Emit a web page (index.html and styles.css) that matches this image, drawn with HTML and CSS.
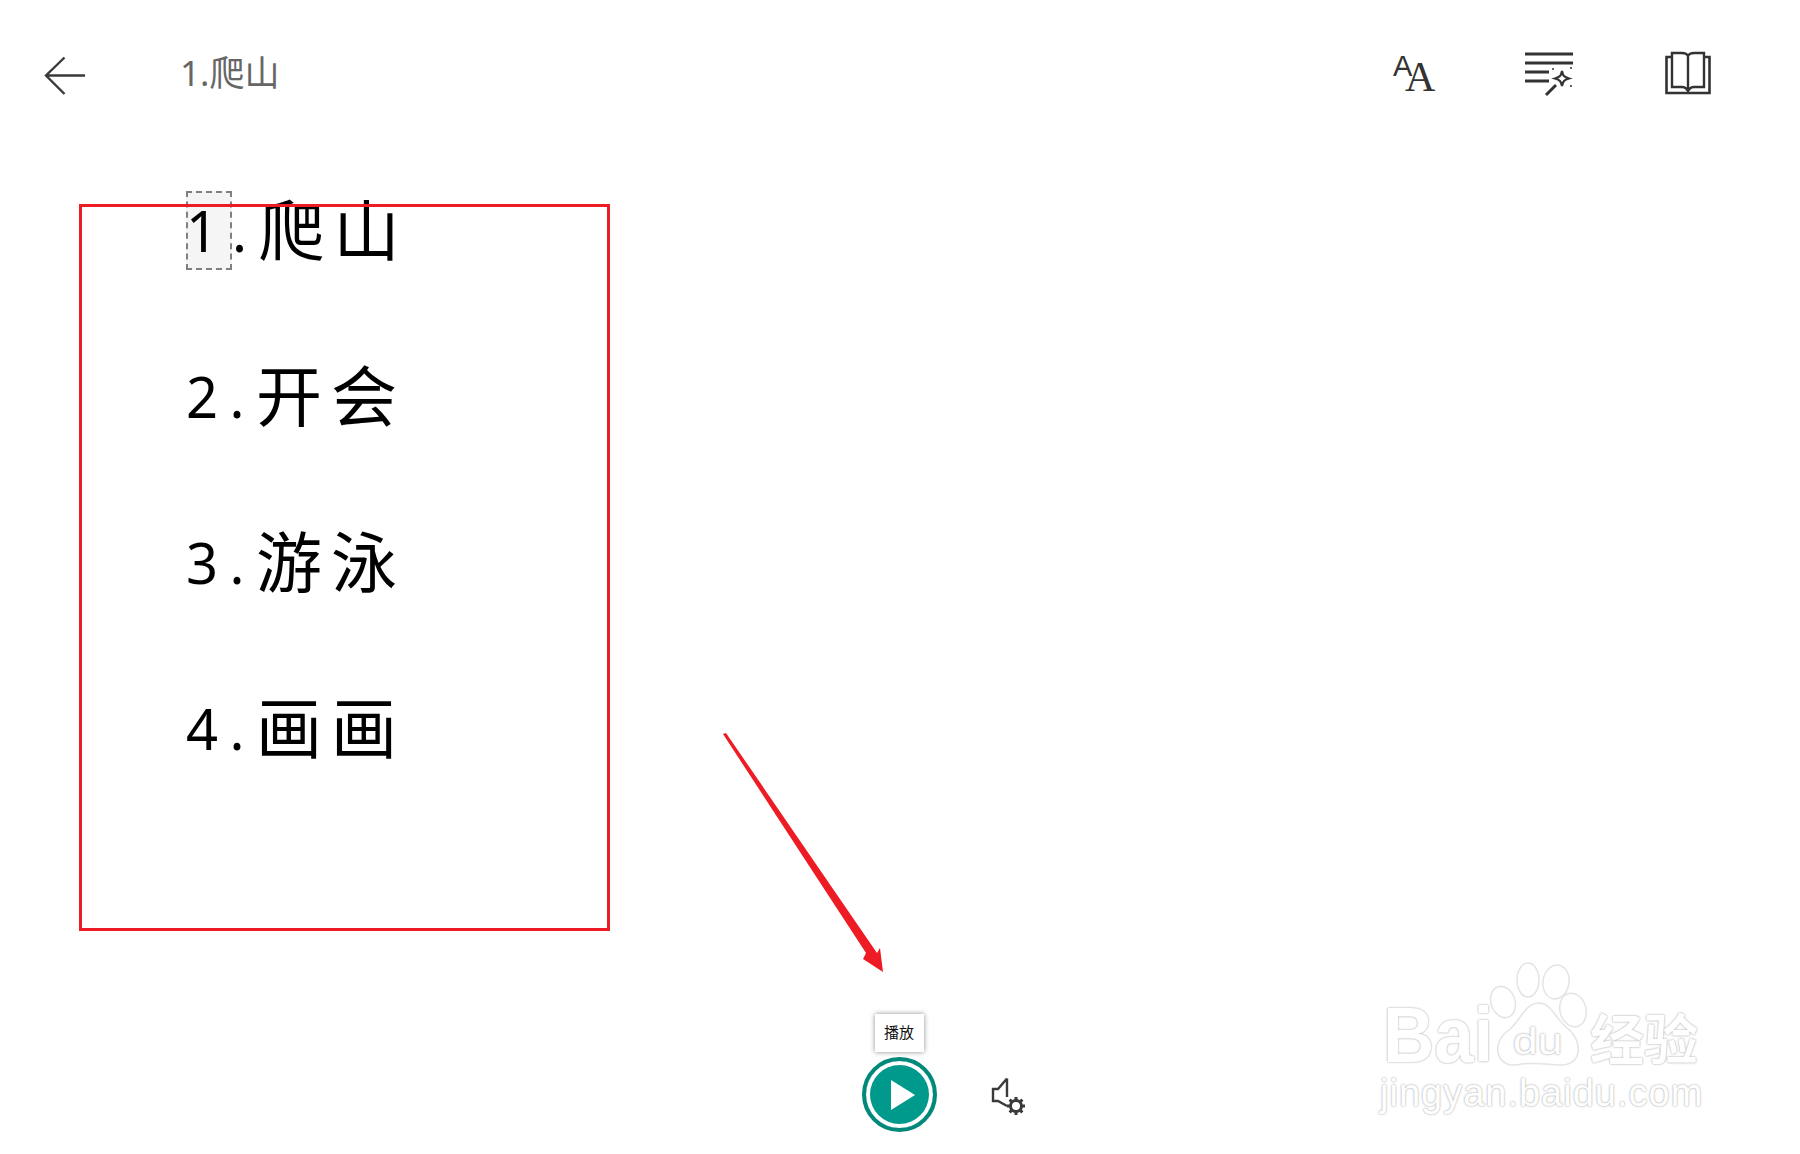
FILE: index.html
```html
<!DOCTYPE html>
<html lang="zh-CN">
  <head>
    <meta charset="UTF-8" />
    <title>1.爬山</title>
    <link rel="stylesheet" href="styles.css">
  </head>

  <body>
    <div class="page">
      <header class="topbar">
        <button class="icon-btn back-btn" aria-label="返回">
          <svg width="44" height="40" viewBox="0 0 44 40">
            <path d="M22.5 1.5 L4 19.5 L22.5 38 M4 19.5 H43" fill="none" stroke="#3a3a3a" stroke-width="2.4" />
          </svg>
        </button>
        <div class="doc-title">1.爬山</div>
        <div class="tools">
          <button class="icon-btn tool-text" aria-label="文字选项">
            <svg width="46" height="52" viewBox="0 0 46 52">
              <text x="1" y="29" class="aa-small">A</text>
              <text x="13" y="44" class="aa-big">A</text>
            </svg>
          </button>
          <button class="icon-btn tool-grammar" aria-label="语法工具">
            <svg width="50" height="46" viewBox="0 0 50 46">
              <path d="M1 3 H49 M1 12 H49 M1 21 H25 M1 30 H25" fill="none" stroke="#333" stroke-width="3" />
              <path d="M38 20 C39 25 40 26 45 27.500 C40 29 39 30 38 35 C37 30 36 29 31 27.500 C36 26 37 25 38 20 Z" fill="none" stroke="#333" stroke-width="2.200" />
              <path d="M32 34 L22 44" fill="none" stroke="#333" stroke-width="3" />
              <path d="M28 18 h2 M29 17 v2 M46 17 h2 M47 16 v2 M46 35 h2 M47 34 v2" stroke="#333" stroke-width="1" />
            </svg>
          </button>
          <button class="icon-btn tool-book" aria-label="阅读首选项">
            <svg width="46" height="44" viewBox="0 0 46 44">
              <path d="M7 2 V36 H17 C20 36 22 38 23 40 C24 38 26 36 29 36 H39 V2 H29 C26 2 24 3 23 5 C22 3 20 2 17 2 Z M23 5 V40" fill="none" stroke="#333" stroke-width="2.400" />
              <path d="M7 6 H1.500 V42 H44.500 V6 H39" fill="none" stroke="#333" stroke-width="2.600" />
            </svg>
          </button>
        </div>
      </header>

      <main class="reader">
        <p class="line"><span class="num"><span class="word-focus">1</span>.</span>爬山</p>
        <p class="line"><span class="num">2.</span>开会</p>
        <p class="line"><span class="num">3.</span>游泳</p>
        <p class="line"><span class="num">4.</span>画画</p>
      </main>

      <footer class="player">
        <div class="play-wrap">
          <div class="tooltip">播放</div>
          <button class="play-btn" aria-label="播放">
            <svg width="24" height="30" viewBox="0 0 24 30"><path d="M0 0 L24 15 L0 30 Z" fill="#fff" /></svg>
          </button>
        </div>
        <button class="icon-btn voice-btn" aria-label="语音设置">
          <svg width="36" height="38" viewBox="0 0 36 38">
            <path d="M16 1.500 L7 12 H2 V24 H7 L16 29 M16 1.500 V20" fill="none" stroke="#3a3a3a" stroke-width="2.400" />
            <circle cx="25" cy="29" r="5.500" fill="none" stroke="#3a3a3a" stroke-width="3" />
            <path d="M25 20 V23 M25 35 V38 M16 29 H19 M31 29 H34 M18.600 22.600 L20.800 24.800 M29.200 33.200 L31.400 35.400 M18.600 35.400 L20.800 33.200 M29.200 24.800 L31.400 22.600" stroke="#3a3a3a" stroke-width="3" />
          </svg>
        </button>
      </footer>

      <!-- annotations drawn over the screenshot -->
      <div class="red-box"></div>
      <svg class="red-arrow" width="170" height="250" viewBox="0 0 170 250">
        <path d="M0 2 L3 1 L154 221 L157 216 L160 240 L140 227 L143 221 Z" fill="#ed1c24" />
      </svg>

      <div class="watermark">
        <svg class="paw" width="110" height="110" viewBox="0 0 110 110">
          <ellipse cx="18" cy="42" rx="12" ry="16" transform="rotate(-20 18 42)" />
          <ellipse cx="43" cy="20" rx="11" ry="17" />
          <ellipse cx="71" cy="22" rx="13" ry="17" transform="rotate(10 71 22)" />
          <ellipse cx="88" cy="50" rx="13" ry="17" transform="rotate(-15 88 50)" />
          <path d="M54 43 C66 43 70 58 82 68 C98 80 98 105 76 105 C64 105 46 101 32 105 C10 107 6 82 24 70 C36 60 40 43 54 43 Z" />
        </svg>
        <div class="wm-logo">
          <span class="wm-bai">Bai</span><span class="wm-du">du</span><span class="wm-cn">经验</span>
        </div>
        <div class="wm-url">jingyan.baidu.com</div>
      </div>
    </div>
  </body>
</html>
```

FILE: styles.css
```css
:root {
  --ink: #000;
  --muted: #666;
  --teal: #009a8c;
  --red: #ed1c24;
}

* {
  margin: 0;
  padding: 0;
  box-sizing: border-box;
}

body {
  background: #fff;
  font-family: "Noto Sans", "Noto Sans CJK SC", sans-serif;
  overflow: hidden;
}

.page {
  position: relative;
  width: 1800px;
  height: 1154px;
  display: flex;
  flex-direction: column;
}

.icon-btn {
  background: none;
  border: none;
  display: flex;
  align-items: center;
  justify-content: center;
}

/* top bar */
.topbar {
  height: 146px;
  display: flex;
  align-items: center;
  padding: 0 89px 0 42px;
}

.back-btn {
  width: 44px;
  margin-top: 5px;
}

.doc-title {
  margin-left: 94px;
  font-size: 35px;
  color: var(--muted);
  margin-top: -5px;
}

.tools {
  margin-left: auto;
  display: flex;
  align-items: center;
}

.tool-text {
  margin-right: 86px;
  margin-top: -1px;
}

.tool-grammar {
  margin-right: 91px;
  margin-top: 1px;
}

.tool-book {
  margin-top: -1px;
}

.aa-small {
  font-family: "Liberation Sans", sans-serif;
  font-size: 29px;
  fill: #333;
}

.aa-big {
  font-family: "Liberation Serif", serif;
  font-size: 42px;
  fill: #333;
}

/* reading area */
.reader {
  flex: 1;
  padding-left: 186px;
}

.line {
  height: 166px;
  line-height: 166px;
  font-size: 66px;
  letter-spacing: 9px;
  color: var(--ink);
}

.num {
  font-size: 56px;
  letter-spacing: 11.500px;
  vertical-align: 3px;
}

.word-focus {
  display: inline-block;
  width: 46px;
  line-height: 79px;
  background: #f5f5f5;
  outline: 2px dashed #808080;
  outline-offset: -2px;
}

/* player */
.player {
  height: 97px;
  display: flex;
  justify-content: center;
  padding-left: 88px;
  gap: 54px;
  align-items: flex-start;
}

.play-wrap {
  position: relative;
}

.play-btn {
  width: 75px;
  height: 75px;
  border-radius: 50%;
  background: var(--teal);
  border: 4px solid #fff;
  outline: 4px solid #00897b;
  outline-offset: -4px;
  box-shadow: inset 0 0 0 4px #fff;
  display: flex;
  align-items: center;
  justify-content: center;
  padding-left: 7px;
}

.tooltip {
  position: absolute;
  left: 13px;
  top: -43px;
  width: 49px;
  height: 38px;
  line-height: 36px;
  text-align: center;
  font-size: 15px;
  color: #111;
  background: #fff;
  box-shadow: 0 0 5px rgba(0, 0, 0, 0.45);
}

.voice-btn {
  margin-top: 20px;
}

/* annotations */
.red-box {
  position: absolute;
  left: 79px;
  top: 204px;
  width: 531px;
  height: 727px;
  border: 3px solid var(--red);
}

.red-arrow {
  position: absolute;
  left: 723px;
  top: 732px;
}

/* watermark */
.watermark {
  position: absolute;
  left: 1375px;
  top: 960px;
  width: 345px;
  height: 170px;
  color: #fff;
}

.paw {
  position: absolute;
  left: 110px;
  top: 0;
  fill: #fff;
  stroke: #e4e4e4;
  stroke-width: 1.500;
}

.wm-logo,
.wm-url {
  position: absolute;
  white-space: nowrap;
  text-shadow: 0 0 2px #bbb, 0 0 2px #bbb;
}

.wm-logo {
  left: 0;
  top: 35px;
  width: 345px;
  height: 80px;
  line-height: 80px;
}

.wm-bai {
  position: absolute;
  left: 8px;
  font-family: "Liberation Sans", sans-serif;
  font-size: 77px;
  font-weight: 700;
  transform: scaleX(0.920);
  transform-origin: left;
}

.wm-du {
  position: absolute;
  left: 138px;
  top: 7px;
  font-family: "Liberation Sans", sans-serif;
  font-size: 37px;
  transform: scaleX(1.200);
  transform-origin: left;
}

.wm-cn {
  position: absolute;
  left: 215px;
  top: 2px;
  font-size: 54px;
  font-family: "Noto Sans CJK SC", sans-serif;
  font-weight: 700;
}

.wm-url {
  left: 5px;
  top: 112px;
  font-family: "Liberation Sans", sans-serif;
  font-size: 38px;
  letter-spacing: 1px;
}
```
